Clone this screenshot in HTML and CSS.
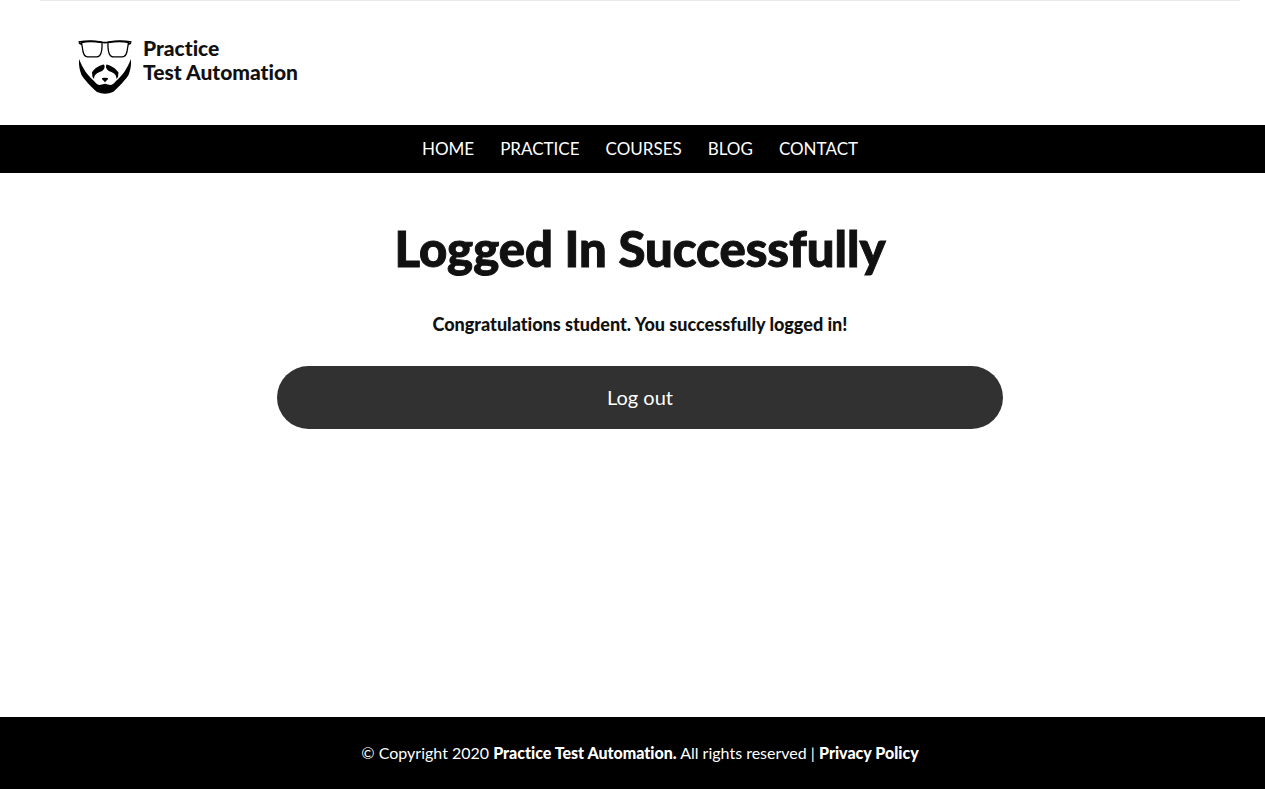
FILE: index.html
```html
<!DOCTYPE html>
<html lang="en">
<head>
<meta charset="utf-8">
<title>Logged In Successfully | Practice Test Automation</title>
<link rel="stylesheet" href="styles.css">
</head>
<body>
<header class="site-header">
  <a class="brand" href="#">
    <svg class="brand-logo" viewBox="0 -1 54 60" aria-hidden="true">
      <g fill="none" stroke="#000" stroke-linejoin="round">
        <path stroke-width="1.300" d="M3.500 5.500Q12 3.500 24 5.500Q24.500 19.500 19 19.800H9.500Q6 19.500 5 14.500Z"/>
        <path stroke-width="1.300" d="M50.500 5.500Q42 3.500 30 5.500Q29.500 19.500 35 19.800H44.500Q48 19.500 49 14.500Z"/>
        <path stroke-width="1.600" d="M.5 5Q12 3 23 5Q27 6.300 31 5Q42 3 53.500 5M1 6L4 7.500M53 6L50 7.500"/>
      </g>
      <path d="M1 22C5 32 10 39 16 44C19 48 21 48.500 24 47.500L27 46.800L30 47.500C33 48.500 35 48 38 44C44 39 49 32 53 22C53.500 29 52 34 50.500 38C48 42 41 50 35 55Q27 58.500 19 55C13 50 6 42 3.500 38C2 34 .5 29 1 22Z"/>
      <path d="M26 27.500C23 28 16 31 14 35.500L14.500 40L16 42C16 37.500 19 36 23 34.500C26 33 27.500 30.500 26 27.500ZM28.500 27.500C31 28 38 31 40.500 35.500L40 40L38.500 42C38.500 37.500 36 36 32 34.500C29 33 27 30.500 28.500 27.500Z"/>
      <path d="M24 41Q27 40.500 30 41Q30.500 42.500 28 44L27 45.500L26 44Q23.500 42.500 24 41Z"/>
    </svg>
    <span class="brand-name">Practice<br>Test Automation</span>
  </a>
</header>
<nav class="site-nav" aria-label="Main">
  <a href="#">HOME</a>
  <a href="#">PRACTICE</a>
  <a href="#">COURSES</a>
  <a href="#">BLOG</a>
  <a href="#">CONTACT</a>
</nav>
<main class="content">
  <h1 class="title">Logged In Successfully</h1>
  <p class="message">Congratulations student. You successfully logged in!</p>
  <a class="logout" href="#">Log out</a>
</main>
<footer class="site-footer">
  <p class="copyright">© Copyright 2020 <strong>Practice Test Automation.</strong> All rights reserved | <a href="#">Privacy Policy</a></p>
</footer>
</body>
</html>
```
FILE: styles.css
```css
* { box-sizing: border-box; }

body {
  display: flex;
  flex-direction: column;
  min-height: 100vh;
  margin: 0;
  background: #fff;
  color: #111;
  font-family: Lato, "Liberation Sans", sans-serif;
  font-variant-ligatures: none;
}

a { color: inherit; text-decoration: none; }

.site-header {
  display: flex;
  margin: 0 25px 0 40px;
  padding: 35px 38px 29px;
  border-top: 1px solid #e8e8e8;
}

.brand { display: flex; gap: 11px; }
.brand-logo { width: 54px; height: 60px; }

.brand-name {
  font-size: 21px;
  font-weight: 900;
  line-height: 24px;
}

.site-nav {
  display: flex;
  justify-content: center;
  gap: 26px;
  padding-left: 15px;
  background: #000;
  color: #fff;
  font-size: 17px;
  line-height: 48px;
}

.content {
  display: flex;
  flex: 1;
  flex-direction: column;
  width: 100%;
  max-width: 741px;
  margin: 0 auto;
  padding: 45px 0 0 15px;
  text-align: center;
}

.title {
  margin: 0;
  font-size: 49px;
  font-weight: 900;
  line-height: 60px;
  -webkit-text-stroke: 1px #111;
}

.message {
  margin: 32px 0 28px;
  font-size: 18px;
  font-weight: 900;
  line-height: 28px;
}

.logout {
  border-radius: 32px;
  background: #313131;
  color: #fff;
  font-size: 20px;
  line-height: 63px;
}

.site-footer {
  padding: 24px 0 24px 15px;
  background: #000;
  color: #fff;
  text-align: center;
}

.copyright { margin: 0; font-size: 16px; line-height: 24px; }
.copyright strong, .copyright a { font-weight: 900; }
```
